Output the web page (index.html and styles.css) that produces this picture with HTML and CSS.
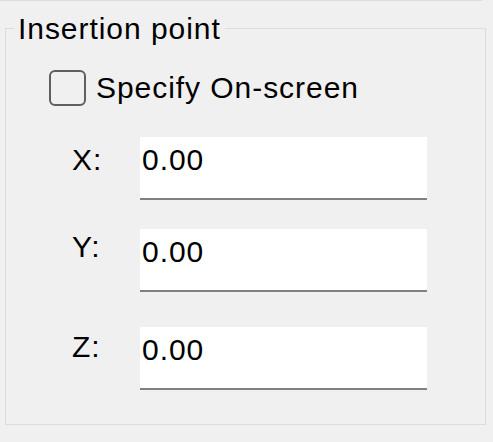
FILE: index.html
```html
<!DOCTYPE html>
<html>
<head>
<meta charset="utf-8">
<link rel="stylesheet" href="styles.css">
</head>
<body>
<div class="prev-edge"></div>
<fieldset class="group">
  <legend class="group-title">Insertion point</legend>
  <label class="check-row">
    <input type="checkbox" class="check">
    <span class="check-text">Specify On-screen</span>
  </label>
  <div class="field row-x">
    <span class="field-label">X:</span>
    <input class="field-input" type="text" value="0.00">
  </div>
  <div class="field row-y">
    <span class="field-label">Y:</span>
    <input class="field-input" type="text" value="0.00">
  </div>
  <div class="field row-z">
    <span class="field-label">Z:</span>
    <input class="field-input" type="text" value="0.00">
  </div>
</fieldset>
</body>
</html>
```
FILE: styles.css
```css
html, body {
  margin: 0;
  padding: 0;
  background: #f0f0f0;
}
body {
  width: 493px;
  height: 442px;
  overflow: hidden;
  font-family: "Liberation Sans", Arial, sans-serif;
  font-size: 30px;
  letter-spacing: 0.95px;
  color: #000;
}
.prev-edge {
  width: 482px;
  height: 1px;
  background: #dcdcdc;
}
.group {
  box-sizing: border-box;
  margin: 10px 0 0 5px;
  width: 481px;
  height: 414px;
  border: 1px solid #dcdcdc;
  padding: 0 8px;
  min-width: 0;
}
.group-title {
  padding: 0 4px;
  line-height: 35px;
}
.check-row {
  display: flex;
  align-items: flex-start;
  margin: 24px 0 0 35px;
  line-height: 35px;
}
.check {
  appearance: none;
  -webkit-appearance: none;
  box-sizing: border-box;
  width: 37px;
  height: 36px;
  margin: 0;
  border: 2px solid #5f5f5f;
  border-radius: 6px;
  background: #f0f0f0;
}
.check-text {
  margin: 0 0 0 10px;
}
.field {
  display: flex;
  align-items: flex-start;
  margin-left: 58px;
  line-height: 35px;
}
.row-x { margin-top: 31px; }
.row-y { margin-top: 29px; }
.row-z { margin-top: 35px; }
.field-label {
  width: 68px;
}
.row-x .field-label { margin-top: 5px; }
.row-y .field-label { margin-top: 0; }
.row-z .field-label { margin-top: 2px; }
.field-input {
  box-sizing: border-box;
  width: 287px;
  height: 63px;
  margin: 0;
  border: 0;
  border-bottom: 2px solid #808080;
  padding: 0 2px 16px 2px;
  background: #fff;
  font: inherit;
  letter-spacing: inherit;
  color: #000;
  outline: none;
}
```
